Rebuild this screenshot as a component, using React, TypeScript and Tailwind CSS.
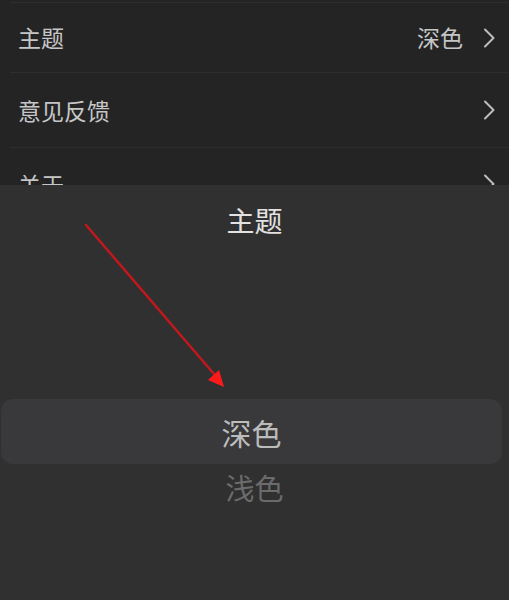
import React from "react";

const font = { fontFamily: '"Noto Sans CJK SC", "Noto Sans", sans-serif' };

function Chevron() {
  return (
    <svg width="12" height="20" viewBox="0 0 12 20" className="shrink-0">
      <path d="M2 1.5 L10.5 10 L2 18.5" fill="none" stroke="#bdbdbd" strokeWidth="2" strokeLinecap="round" strokeLinejoin="round" />
    </svg>
  );
}

function Row({ label, value, h }: { label: string; value?: string; h: string }) {
  return (
    <div className={`flex items-center justify-between pl-[18px] pr-[14px] ${h}`}>
      <span className="text-[23px] leading-none text-[#c6c6c6]">{label}</span>
      <div className="flex items-center gap-[20px]">
        {value && <span className="text-[23px] leading-none text-[#c6c6c6]">{value}</span>}
        <Chevron />
      </div>
    </div>
  );
}

export default function App() {
  return (
    <div className="flex h-[600px] w-[509px] flex-col overflow-hidden bg-[#242424]" style={font}>
      <div className="h-[185px] shrink-0 overflow-hidden">
        <div className="ml-[10px] h-px bg-[#2e2e2e] mt-[2px]" />
        <Row label="主题" value="深色" h="h-[69px]" />
        <div className="ml-[10px] h-px bg-[#2e2e2e]" />
        <Row label="意见反馈" h="h-[74px]" />
        <div className="ml-[10px] h-px bg-[#2e2e2e]" />
        <div className="pt-[24px]">
          <Row label="关于" h="h-[24px]" />
        </div>
      </div>

      <div className="relative flex flex-1 flex-col items-center bg-[#303030]">
        <div className="pt-[20px] text-[28px] leading-[30px] text-[#e2e2e2]">主题</div>

        <div className="mt-[164px] flex h-[65px] w-[501px] items-center justify-center self-start ml-[1px] rounded-[12px] bg-[#39393b]">
          <span className="text-[30px] leading-none text-[#bcbcbc]">深色</span>
        </div>
        <div className="mt-[5px] text-[29px] leading-[36px] text-[#6b6b6b]">浅色</div>

        <svg className="absolute left-0 top-0" width="509" height="220" viewBox="0 0 509 220">
          <line x1="86" y1="40" x2="214" y2="189" stroke="#c0181c" strokeWidth="2.5" strokeLinecap="round" />
          <polygon points="224,202 208,195 219,185" fill="#ff1a1a" />
        </svg>
      </div>
    </div>
  );
}
